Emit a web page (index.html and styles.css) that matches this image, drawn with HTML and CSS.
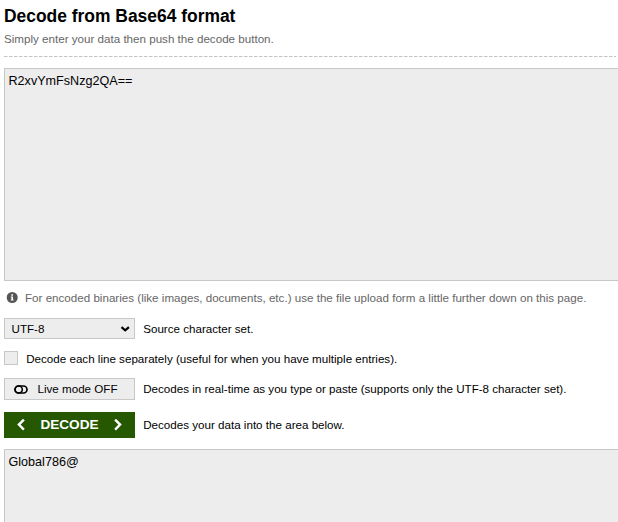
FILE: index.html
```html
<!DOCTYPE html>
<html lang="en">
<head>
<meta charset="utf-8">
<title>Decode from Base64 format</title>
<link rel="stylesheet" href="styles.css">
</head>
<body>
<main class="page">
  <h1 class="title">Decode from Base64 format</h1>
  <p class="subtitle">Simply enter your data then push the decode button.</p>
  <hr class="divider">
  <div class="area area-input">R2xvYmFsNzg2QA==</div>
  <div class="hint">
    <svg class="info" viewBox="0 0 12 12"><circle cx="6.200" cy="5.500" r="5.500" fill="#555"/><path d="M5.300 2.200h1.700v1.500H5.300zM4.800 4.500h2.200v3h.6v1.100H4.800V7.500h.6V5.600h-.6z" fill="#fff"/></svg>
    <span>For encoded binaries (like images, documents, etc.) use the file upload form a little further down on this page.</span>
  </div>
  <div class="row row-charset">
    <div class="control select"><span>UTF-8</span>
      <svg class="caret" viewBox="0 0 10 6"><path d="M1.500 1.100L5.200 4.300 8.900 1.100" fill="none" stroke="#000" stroke-width="2.100"/></svg>
    </div>
    <span>Source character set.</span>
  </div>
  <div class="row row-lines">
    <div class="checkbox"></div>
    <span class="lines-label">Decode each line separately (useful for when you have multiple entries).</span>
  </div>
  <div class="row row-live">
    <div class="control live">
      <svg class="toggle" viewBox="0 0 14 9"><rect x="1" y="1" width="12" height="7" rx="3.500" fill="none" stroke="#000" stroke-width="1.700"/><ellipse cx="4.700" cy="4.500" rx="3.600" ry="3.500" fill="none" stroke="#000" stroke-width="1.600"/></svg>
      <span>Live mode OFF</span>
    </div>
    <span>Decodes in real-time as you type or paste (supports only the UTF-8 character set).</span>
  </div>
  <div class="row row-decode">
    <div class="decode">
      <svg class="chevron" viewBox="0 0 8 12"><path d="M6.900.6L1.900 5.600l5 5" fill="none" stroke="#fff" stroke-width="2.400"/></svg>
      <span>DECODE</span>
      <svg class="chevron" viewBox="0 0 8 12"><path d="M1.100.6l5 5-5 5" fill="none" stroke="#fff" stroke-width="2.400"/></svg>
    </div>
    <span>Decodes your data into the area below.</span>
  </div>
  <div class="area area-output">Global786@</div>
</main>
</body>
</html>
```
FILE: styles.css
```css
* { box-sizing: border-box; }
body {
  margin: 0;
  background: #fff;
  color: #000;
  font: 11.62px/16px "Liberation Sans", Arial, sans-serif;
}
.page {
  height: 522px;
  padding-left: 4px;
  overflow: hidden;
  white-space: nowrap;
}
.title {
  margin: 0;
  padding-top: 5px;
  font-size: 17.43px;
  line-height: 22px;
}
.subtitle {
  margin: 4px 0 0;
  color: #666;
}
.divider {
  height: 1px;
  margin: 9px 2px 11px 0;
  border: 0;
  background: repeating-linear-gradient(90deg, #c4c4c4 0 3px, #e0e0e0 3px 4px, #fff 4px 5px);
}
.area {
  border: 1px solid #c8c8c8;
  border-right: 0;
  background: #ededed;
  padding: 4px 4px 4px 3.5px;
  font-size: 12.6px;
}
.area-input { height: 213px; }
.area-output { height: 90px; margin-top: 11px; }
.hint {
  display: flex;
  align-items: center;
  gap: 7px;
  height: 16px;
  margin-top: 9px;
  padding-left: 2px;
  color: #666;
}
.info { width: 12px; height: 12px; }
.row {
  display: flex;
  align-items: center;
  gap: 8.2px;
}
.control {
  display: flex;
  align-items: center;
  width: 131px;
  border: 1px solid #c8c8c8;
  background: #ededed;
}
.row-charset { margin-top: 12px; height: 21px; }
.select {
  height: 21px;
  justify-content: space-between;
  padding: 0 4px 0 6.500px;
}
.caret { width: 10px; height: 6px; }
.row-lines { margin-top: 12px; height: 14px; }
.lines-label { padding-top: 2px; }
.checkbox {
  width: 14px;
  height: 14px;
  border: 1px solid #c8c8c8;
  background: #ededed;
}
.row-live { margin-top: 13px; height: 22px; }
.live { height: 22px; padding-left: 9px; gap: 9.500px; }
.toggle { width: 14px; height: 9px; }
.row-decode { margin-top: 12px; height: 26px; }
.decode {
  display: flex;
  align-items: center;
  justify-content: space-between;
  width: 131px;
  height: 26px;
  padding: 0 13px;
  background: #255800;
  color: #fff;
  font-size: 13.6px;
  font-weight: bold;
}
.chevron { width: 8px; height: 12px; }
```
